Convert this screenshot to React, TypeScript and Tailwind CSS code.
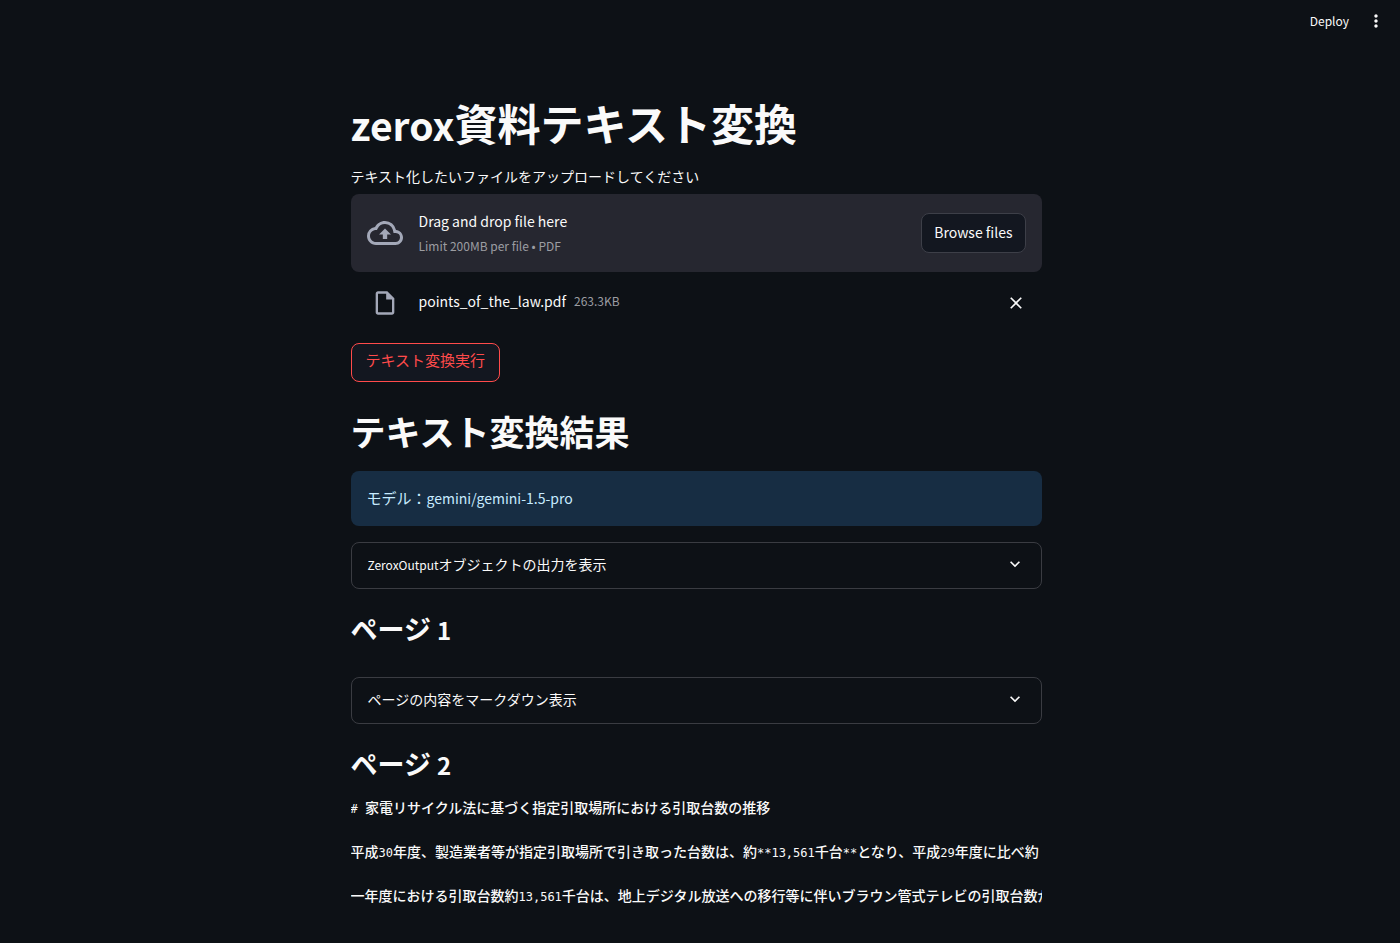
import { useRef, useState } from "react";
import type { ReactNode } from "react";
import { MdClose, MdExpandMore, MdMoreVert } from "react-icons/md";

const pages = [
  { id: 1, title: "1", content: "" },
  {
    id: 2,
    title: "2",
    content: [
      "# 家電リサイクル法に基づく指定引取場所における引取台数の推移",
      "平成30年度、製造業者等が指定引取場所で引き取った台数は、約**13,561千台**となり、平成29年度に比べ約",
      "一年度における引取台数約13,561千台は、地上デジタル放送への移行等に伴いブラウン管式テレビの引取台数が",
    ].join("\n\n"),
  },
];

function CloudUploadIcon() {
  return (
    <svg viewBox="0 0 24 24" className="size-9 shrink-0 fill-[#a3a8b8]" aria-hidden="true">
      <path d="M19.35 10.04A7.49 7.49 0 0012 4C9.11 4 6.6 5.64 5.35 8.04A5.994 5.994 0 000 14c0 3.31 2.69 6 6 6h13c2.76 0 5-2.24 5-5 0-2.64-2.05-4.78-4.65-4.96zM19 18H6c-2.21 0-4-1.79-4-4 0-2.05 1.53-3.76 3.56-3.97l1.07-.11.5-.95A5.469 5.469 0 0112 6c2.62 0 4.88 1.86 5.39 4.43l.3 1.5 1.53.11A2.98 2.98 0 0122 15c0 1.65-1.35 3-3 3zM8 13h2.55v3h2.9v-3H16l-4-4-4 4z" />
    </svg>
  );
}

function FileIcon() {
  return (
    <svg viewBox="0 0 24 24" className="size-7 fill-[#a3a8b8]" aria-hidden="true">
      <path d="M14 2H6c-1.1 0-1.99.9-1.99 2L4 20c0 1.1.89 2 1.99 2H18c1.1 0 2-.9 2-2V8l-6-6zM6 20V4h7v5h5v11H6z" />
    </svg>
  );
}

function Expander({ label, children }: { label: ReactNode; children?: ReactNode }) {
  return (
    <details className="group rounded-lg border border-[#3a3c42]">
      <summary className="flex h-[45px] cursor-pointer list-none items-center justify-between px-4 pb-1 text-sm">
        <span>{label}</span>
        <MdExpandMore size={20} className="group-open:rotate-180" />
      </summary>
      {children && <div className="px-4 pb-4 text-sm">{children}</div>}
    </details>
  );
}

// Raw page text: half-width runs are set a size smaller than the Japanese
function RawText({ text }: { text: string }) {
  return (
    <pre className="mt-4 overflow-hidden font-['DejaVu_Sans_Mono','Noto_Sans_CJK_JP',monospace] text-sm leading-[22px] font-medium">
      {text.split(/([ -~]+)/).map((part, i) =>
        i % 2 ? (
          <span key={i} className="text-xs font-normal">
            {part}
          </span>
        ) : (
          part
        )
      )}
    </pre>
  );
}

export default function App() {
  const fileInput = useRef<HTMLInputElement>(null);
  const [fileName, setFileName] = useState("points_of_the_law.pdf");

  return (
    <div
      lang="ja"
      className="min-h-screen bg-[#0d1116] font-['Noto_Sans_CJK_JP',sans-serif] text-[#fafafa]"
    >
      <header className="flex h-[42px] items-center justify-end gap-[17px] pr-3.5">
        <button type="button" className="text-xs">
          Deploy
        </button>
        <button type="button" aria-label="Menu">
          <MdMoreVert size={20} />
        </button>
      </header>

      <main className="pt-[54px] pr-2 pb-6">
        <div className="mx-auto w-full max-w-[691px]">
          <h1 className="text-[43px] leading-[52px] font-bold">
            <span className="text-[39px]">zerox</span>資料テキスト変換
          </h1>

          <label htmlFor="upload" className="mt-[15px] block text-sm leading-[22px]">
            テキスト化したいファイルをアップロードしてください
          </label>
          <section className="mt-[7px] flex h-[78px] items-center rounded-lg bg-[#262730] px-4">
            <CloudUploadIcon />
            <div className="ml-4 flex-1 pt-0.5">
              <p className="text-sm leading-6">Drag and drop file here</p>
              <p className="text-xs leading-[26px] text-[#9c9da2]">Limit 200MB per file • PDF</p>
            </div>
            <input
              id="upload"
              ref={fileInput}
              type="file"
              accept=".pdf"
              className="hidden"
              onChange={(e) => setFileName(e.target.files?.[0]?.name ?? "")}
            />
            <button
              type="button"
              onClick={() => fileInput.current?.click()}
              className="h-10 rounded-lg border border-[#3d3f48] bg-[#131720] px-3 pb-0.5 text-sm"
            >
              Browse files
            </button>
          </section>

          <div className="mt-[11px] flex h-10 items-center px-4">
            {fileName && (
              <>
                <span className="flex w-9 justify-center">
                  <FileIcon />
                </span>
                <span className="ml-4 pb-1 text-sm">{fileName}</span>
                <span className="ml-2 flex-1 pb-1 text-xs text-[#9c9da2]">263.3KB</span>
                <button type="button" aria-label="Remove file" onClick={() => setFileName("")}>
                  <MdClose size={20} />
                </button>
              </>
            )}
          </div>

          <button
            type="button"
            className="mt-5 block h-[39px] rounded-lg border border-[#ff4b4b] bg-[#131720] px-3.5 pb-1 text-[15px] text-[#ff4b4b]"
          >
            テキスト変換実行
          </button>

          <h2 className="mt-7 text-[35px] leading-[42px] font-bold">テキスト変換結果</h2>

          <div className="mt-[19px] flex h-[55px] items-center rounded-lg bg-[#172d43] px-4 text-[15px] text-[#c7ebff]">
            <p>
              モデル：<span className="text-sm">gemini/gemini-1.5-pro</span>
            </p>
          </div>

          <div className="mt-4">
            <Expander
              label={
                <>
                  <span className="text-xs">ZeroxOutput</span>オブジェクトの出力を表示
                </>
              }
            />
          </div>

          {pages.map((page) => (
            <section key={page.id} className="mt-[23px]">
              <h3 className="text-[27px] leading-[34px] font-bold">
                ページ <span className="text-2xl">{page.title}</span>
              </h3>
              {page.content ? (
                <RawText text={page.content} />
              ) : (
                <div className="mt-[31px]">
                  <Expander label="ページの内容をマークダウン表示" />
                </div>
              )}
            </section>
          ))}
        </div>
      </main>
    </div>
  );
}
